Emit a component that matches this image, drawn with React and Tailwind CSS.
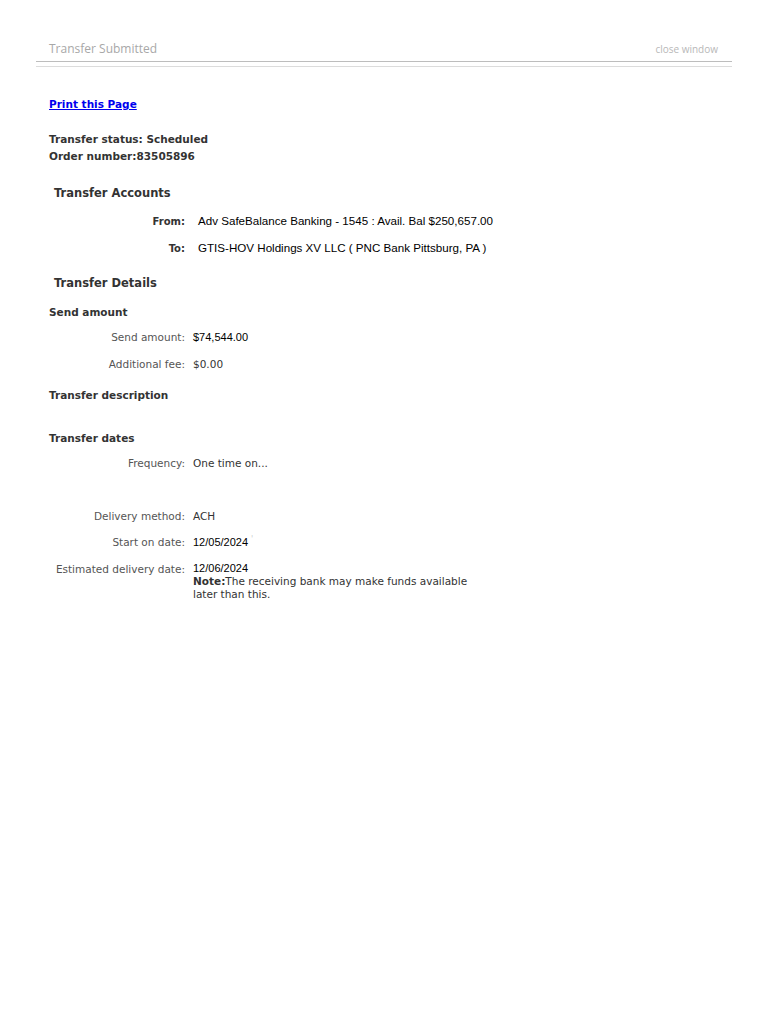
export default function App() {
  const verdana = { fontFamily: '"DejaVu Sans", Verdana, sans-serif' };
  const arial = { fontFamily: '"Liberation Sans", Arial, sans-serif' };
  const Row = ({ label, children, h = "h-[27px]", gap = "gap-[8px]", labelCls = "text-[10.5px] text-[#555]", valueCls = "" }) => (
    <div className={`flex items-center ${h} ${gap}`}>
      <div className={`w-[136px] shrink-0 text-right ${labelCls}`}>{label}</div>
      <div className={valueCls}>{children}</div>
    </div>
  );
  return (
    <div className="min-h-[1024px] w-[768px] bg-white" style={verdana}>
      <div className="mx-[36px] w-[696px] pt-[39px]">
        <div className="flex h-[20px] items-center justify-between px-[13px]">
          <span className="text-[12px] text-[#a8a8a8]" style={{ fontFamily: '"Open Sans", sans-serif' }}>Transfer Submitted</span>
          <span className="pr-[1px] text-[10px] text-[#b8b8b8]" style={{ fontFamily: '"Open Sans", sans-serif' }}>close window</span>
        </div>
        <div className="mt-[2px] h-px bg-[#bdbdbd]" />
        <div className="mt-[4px] h-px bg-[#dcdcdc]" />
      </div>
      <div className="pl-[49px]">
        <div className="mt-[28px] h-[16px] leading-[16px]">
          <a href="#" className="text-[10.5px] font-bold text-[#0000ee] underline">Print this Page</a>
        </div>
        <div className="mt-[20px] text-[10.5px] font-bold leading-[17px] text-[#333]">
          <div>Transfer status: Scheduled</div>
          <div>Order number:83505896</div>
        </div>
        <div className="ml-[5px] mt-[19px] h-[18px] text-[11.5px] font-bold leading-[18px] text-[#333]">Transfer Accounts</div>
        <div className="mt-[6px]">
          <Row label="From:" gap="gap-[13px]" labelCls="text-[10px] font-bold text-[#333]" valueCls="text-[11.6px] text-black">
            <span style={arial}>Adv SafeBalance Banking - 1545 : Avail. Bal $250,657.00</span>
          </Row>
          <Row label="To:" gap="gap-[13px]" labelCls="text-[10px] font-bold text-[#333]" valueCls="text-[11.6px] text-black">
            <span style={arial}>GTIS-HOV Holdings XV LLC ( PNC Bank Pittsburg, PA )</span>
          </Row>
        </div>
        <div className="ml-[5px] mt-[12px] h-[18px] text-[11.5px] font-bold leading-[18px] text-[#333]">Transfer Details</div>
        <div className="mt-[12px] h-[16px] text-[10.5px] font-bold leading-[16px] text-[#333]">Send amount</div>
        <div className="mt-[4px]">
          <Row label="Send amount:" valueCls="text-[11px] text-black">
            <span style={arial}>$74,544.00</span>
          </Row>
          <Row label="Additional fee:" valueCls="text-[10.5px] text-[#333]">$0.00</Row>
        </div>
        <div className="mt-[9px] h-[16px] text-[10.5px] font-bold leading-[16px] text-[#333]">Transfer description</div>
        <div className="mt-[27px] h-[16px] text-[10.5px] font-bold leading-[16px] text-[#333]">Transfer dates</div>
        <div className="mt-[10px]">
          <Row label="Frequency:" h="h-[16px]" valueCls="text-[10.5px] text-[#333]">One time on...</Row>
        </div>
        <div className="mt-[37px]">
          <Row label="Delivery method:" h="h-[16px]" valueCls="text-[10.5px] text-[#333]">ACH</Row>
        </div>
        <div className="mt-[10px]">
          <Row label="Start on date:" h="h-[16px]" valueCls="text-[11px] text-black">
            <span style={arial}>12/05/2024</span>
            <span className="ml-[3px] align-top text-[8px] text-[#ccc]">'</span>
          </Row>
        </div>
        <div className="mt-[10px] flex items-start gap-[8px]">
          <div className="w-[136px] shrink-0 text-right text-[10.5px] leading-[16px] text-[#555]">Estimated delivery date:</div>
          <div className="pt-[1px] text-[10.5px] leading-[13px] text-[#333]">
            <div className="text-[11px] text-black" style={arial}>12/06/2024</div>
            <div><span className="font-bold">Note:</span>The receiving bank may make funds available</div>
            <div>later than this.</div>
          </div>
        </div>
      </div>
    </div>
  );
}
